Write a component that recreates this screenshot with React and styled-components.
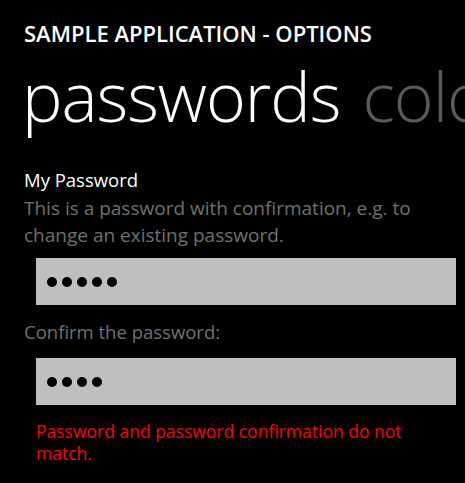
import styled, { createGlobalStyle } from 'styled-components';

const GlobalStyle = createGlobalStyle`
  html, body {
    margin: 0;
    padding: 0;
    background: #000;
    height: 100%;
  }
  body {
    font-family: "Open Sans", "Noto Sans", sans-serif;
    color: #fff;
  }
`;

const Page = styled.div`
  width: 465px;
  height: 483px;
  overflow: hidden;
  background: #000;
  padding: 0 0 0 24px;
  box-sizing: border-box;
`;

const AppTitle = styled.h1`
  margin: 0;
  padding-top: 20px;
  font-size: 22px;
  font-weight: 600;
  line-height: 26px;
  letter-spacing: 0;
  white-space: nowrap;
`;

const Pivot = styled.div`
  display: flex;
  gap: 22px;
  white-space: nowrap;
  margin-top: 10px;
  margin-left: -2px;
`;

const PivotItem = styled.span`
  font-size: 68px;
  font-weight: 300;
  line-height: 80px;
  letter-spacing: -1px;
  color: ${({ active }) => (active ? '#fff' : '#5a5a5a')};
`;

const Section = styled.div`
  margin-top: 32px;
  padding-right: 9px;
`;

const Label = styled.div`
  font-size: 18.5px;
  line-height: 24px;
  color: ${({ dim }) => (dim ? '#707070' : '#fff')};
`;

const Hint = styled.div`
  margin-top: 3px;
  font-size: 19px;
  line-height: 27px;
  color: #707070;
`;

const Field = styled.div`
  margin: ${({ top }) => top} 0 0 12px;
  height: 47px;
  background: #bfbfbf;
  display: flex;
  align-items: center;
  padding-left: 11px;
  gap: 5px;
`;

const Dot = styled.span`
  width: 10px;
  height: 10px;
  border-radius: 50%;
  background: #000;
`;

const ConfirmLabel = styled(Label)`
  margin-top: 15px;
`;

const Error = styled.div`
  margin: 15px 0 0 12px;
  font-size: 17.5px;
  line-height: 22px;
  color: #f00;
  width: 390px;
`;

const Dots = ({ count }) => (
  <>
    {Array.from({ length: count }).map((_, i) => (
      <Dot key={i} />
    ))}
  </>
);

export default function App() {
  return (
    <>
      <GlobalStyle />
      <Page>
        <AppTitle>SAMPLE APPLICATION - OPTIONS</AppTitle>
        <Pivot>
          <PivotItem active>passwords</PivotItem>
          <PivotItem>colors</PivotItem>
        </Pivot>
        <Section>
          <Label>My Password</Label>
          <Hint>This is a password with confirmation, e.g. to change an existing password.</Hint>
          <Field top="9px">
            <Dots count={5} />
          </Field>
          <ConfirmLabel dim>Confirm the password:</ConfirmLabel>
          <Field top="14px">
            <Dots count={4} />
          </Field>
          <Error>Password and password confirmation do not match.</Error>
        </Section>
      </Page>
    </>
  );
}
